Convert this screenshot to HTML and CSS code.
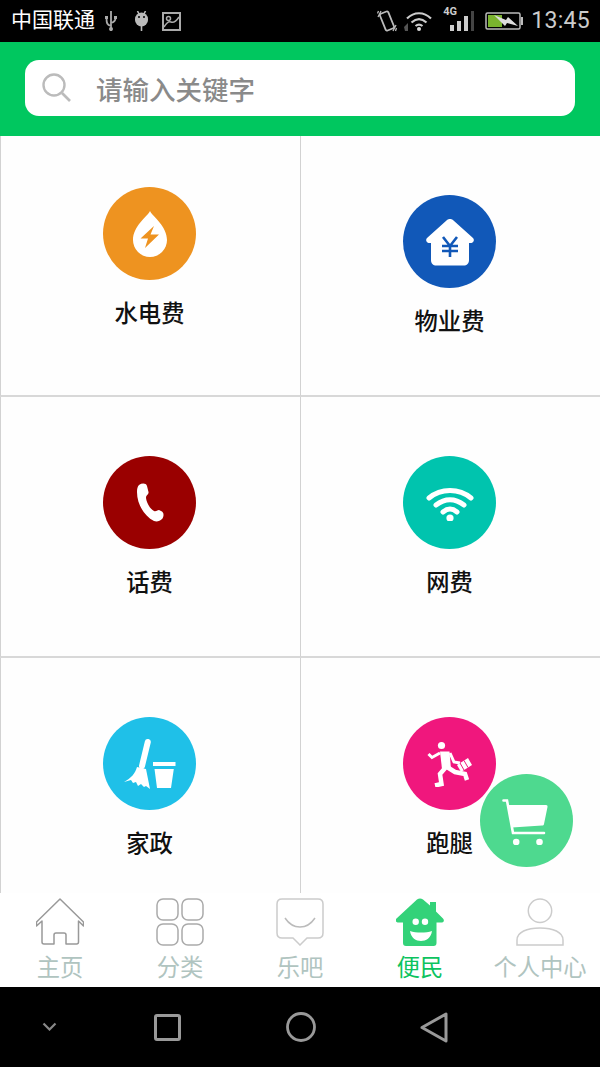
FILE: index.html
```html
<!DOCTYPE html>
<html lang="zh-CN">
<head>
  <meta charset="UTF-8">
  <link rel="stylesheet" href="styles.css">
</head>
<body>
  <div id="status-bar">
    <span class="carrier">中国联通</span>
    <svg class="st-usb" width="12" height="20" viewBox="0 0 12 20"><path d="M6 0v20M6 15C2 14 1.500 12 1.500 7M6 12c4-1 4.500-3 4.500-5" fill="none" stroke="#aaa" stroke-width="1.800"/><circle cx="6" cy="18" r="2" fill="#aaa"/><rect x="0" y="5" width="3" height="3" fill="#aaa"/><rect x="9" y="5" width="3" height="3" fill="#aaa"/></svg>
    <svg class="st-droid" width="13" height="20" viewBox="0 0 13 20"><path d="M0 8a6.500 6.500 0 0 1 13 0v1a6.500 6.500 0 0 1-13 0z" fill="#bbb"/><path d="M6.500 14v6M2.500 0l1.500 3M10.500 0l-1.500 3" stroke="#bbb" stroke-width="1.600"/><circle cx="4" cy="6" r="1" fill="#000"/><circle cx="9" cy="6" r="1" fill="#000"/></svg>
    <svg class="st-image" width="19" height="19" viewBox="0 0 19 19"><rect x="1" y="1" width="17" height="17" fill="none" stroke="#aaa" stroke-width="2"/><circle cx="6.500" cy="6.500" r="2" fill="none" stroke="#aaa" stroke-width="1.500"/><path d="M2 15c3-5 5-6 7-5s4 1 8-5" fill="none" stroke="#aaa" stroke-width="1.500"/></svg>
    <div class="status-right">
      <svg class="st-vibrate" width="20" height="22" viewBox="0 0 20 22"><rect x="5.500" y="2" width="9" height="18" rx="1.500" transform="rotate(-22 10 11)" fill="none" stroke="#bbb" stroke-width="1.800"/><path d="M4 1 1 7M19 15l-3 6M1.500 1 .5 3.500M19.500 18l-1 3" stroke="#bbb" stroke-width="1.300" fill="none"/></svg>
      <svg class="st-wifi" width="30" height="20" viewBox="0 0 30 20"><path d="M3 7.500c7-7 17-7 24 0M7.500 11.500c5-4.500 10-4.500 15 0M11.500 15c2.500-2 4.500-2 7 0" fill="none" stroke="#ccc" stroke-width="2.200"/><circle cx="15" cy="18" r="2" fill="#ddd"/><path d="M0 16l4-4v8H1z" fill="#555"/></svg>
      <div class="st-signal">
        <span class="net">4G</span>
        <svg width="25" height="20" viewBox="0 0 25 20"><path d="M0 14h4v6H0zM7 10h4v10H7zM14 5h4v15h-4z" fill="#ccc"/><path d="M21 0h3v20h-3z" fill="#444"/></svg>
      </div>
      <svg class="st-battery" width="38" height="18" viewBox="0 0 38 18"><rect x="1" y="1" width="34" height="16" rx="1.500" fill="none" stroke="#bbb" stroke-width="1.500"/><rect x="3" y="3" width="14" height="12" fill="#7ab32e"/><rect x="36" y="5" width="2" height="8" fill="#bbb"/><path d="M9 3l12 5 2-3 10 9-11-3-2 3z" fill="#ddd"/></svg>
      <span class="clock">13:45</span>
    </div>
  </div>

  <div id="search-wrap">
    <div class="search-box">
      <svg width="30" height="30" viewBox="0 0 30 30"><circle cx="13" cy="12" r="10.500" fill="none" stroke="#bbb" stroke-width="2.400"/><path d="M21 20l8 8" stroke="#bbb" stroke-width="2.600"/></svg>
      <span class="placeholder">请输入关键字</span>
    </div>
  </div>

  <div id="services">
    <div class="cell cell-tight">
      <div class="circle orange">
        <svg width="40" height="48" viewBox="0 0 40 48"><path d="M20 1C17 7 3 16 3 30a17 17 0 0 0 34 0C37 16 23 7 20 1z" fill="#fff"/><path d="M24 16L10.500 28.500h7.500L15 38l14-13.500h-8.500z" fill="#ee9320"/></svg>
      </div>
      <span class="label">水电费</span>
    </div>
    <div class="cell">
      <div class="circle blue">
        <svg width="50" height="50" viewBox="0 0 50 50"><path d="M25 2c1.500 0 2.500.5 3.500 1.500L48 21c1.500 1.500 1 4-1.500 5H44v17c0 3.500-2 5.500-5.500 5.500h-27C8 48.500 6 46.500 6 43V26H3.500C1 25 .5 22.500 2 21L21.500 3.500C22.500 2.500 23.500 2 25 2z" fill="#fff"/><path d="M18 20l7 9 7-9M17 29h16M17 34h16M25 29v11" fill="none" stroke="#1158b8" stroke-width="2.600"/></svg>
      </div>
      <span class="label">物业费</span>
    </div>
    <div class="cell">
      <div class="circle red">
        <svg width="30" height="42" viewBox="0 0 30 42"><path d="M4 3C7 1 11 1 12 4l1.500 6c.5 2-2 3-2.500 5 0 5 4 12 8 14 2 1 3-1 5-1l3 1.500c2 1.500 2 5 0 7.500-2 2-5 3-8 2C9 34 2 22 2 10c0-3 .5-5.500 2-7z" fill="#fff"/></svg>
      </div>
      <span class="label">话费</span>
    </div>
    <div class="cell">
      <div class="circle teal">
        <svg width="48" height="36" viewBox="0 -1 48 36"><path d="M3 12c12-10 30-10 42 0M10 19c9-7 19-7 28 0M17 26c5-4 9-4 14 0" fill="none" stroke="#fff" stroke-width="5" stroke-linecap="round"/><circle cx="24" cy="32" r="3.600" fill="#fff"/></svg>
      </div>
      <span class="label">网费</span>
    </div>
    <div class="cell">
      <div class="circle sky">
        <svg width="52" height="52" viewBox="0 0 52 52"><path d="M23.800 4L18 28" stroke="#fff" stroke-width="6" stroke-linecap="round"/><path d="M13 29l9 2 4 20-4-3-2 1-3-3-3 2-2-4-3 1-2-3-7 2c7-4 11-8 13-15z" fill="#fff"/><path d="M29 24h22.500v4H29zM30.500 31h19.300L47 50H33z" fill="#fff"/></svg>
      </div>
      <span class="label">家政</span>
    </div>
    <div class="cell">
      <div class="circle pink">
        <svg width="46" height="46" viewBox="0 0 46 46"><circle cx="14.500" cy="4.500" r="3.600" fill="#fff"/><path d="M1.500 13L5 16.500 13 12M23 12l4 9 6 1" fill="none" stroke="#fff" stroke-width="3"/><path d="M13 10.500h9.500L24 28h-9z" fill="#fff"/><path d="M19 26l-6 7 1.500 10L8 44.500M20 26l8 5 10 2 2 6" fill="none" stroke="#fff" stroke-width="4.500"/><path d="M30 24l11-7 4 7-11 7z" fill="#fff"/><path d="M33 22l4 7M37 19.500l4 7" stroke="#f0177d" stroke-width="1"/></svg>
      </div>
      <span class="label">跑腿</span>
    </div>
  </div>

  <div class="cart-fab">
    <svg width="50" height="48" viewBox="0 0 50 48"><path d="M1.500 3.500H5l6 32.500h31" fill="none" stroke="#fff" stroke-width="2.600" stroke-linecap="round"/><path d="M6 8h38c1.200 0 1.700.8 1.500 2l-3.500 17c-.2 1-.8 1.500-2 1.500L10 30.500z" fill="#fff"/><circle cx="14.200" cy="45" r="3.300" fill="#fff"/><circle cx="37.500" cy="45" r="3.300" fill="#fff"/></svg>
  </div>

  <div id="tab-bar">
    <div class="tab">
      <svg width="48" height="48" viewBox="0 0 48 48"><path d="M24 1L47.500 24v4l-5-5v21c0 1-1 2-2 2H30V37c0-1-1-2-2-2h-8c-1 0-2 1-2 2v9H8c-1 0-2-1-2-2V23l-5.500 5v-4z" fill="none" stroke="#999" stroke-width="1.500" stroke-linejoin="round"/></svg>
      <span class="tab-text">主页</span>
    </div>
    <div class="tab">
      <svg width="48" height="48" viewBox="0 0 48 48"><g fill="none" stroke="#aaa" stroke-width="1.500"><rect x="1" y="1" width="21" height="21" rx="6"/><rect x="26" y="1" width="21" height="21" rx="6"/><rect x="1" y="26" width="21" height="21" rx="6"/><rect x="26" y="26" width="21" height="21" rx="6"/></g></svg>
      <span class="tab-text">分类</span>
    </div>
    <div class="tab">
      <svg width="48" height="48" viewBox="0 0 48 48"><path d="M6 1h36c3 0 5 2 5 5v29c0 3-2 5-5 5H31l-7 7-7-7H6c-3 0-5-2-5-5V6c0-3 2-5 5-5z" fill="none" stroke="#ccc" stroke-width="1.500"/><path d="M9 20c8 12 22 12 30 0" fill="none" stroke="#bbb" stroke-width="1.500"/></svg>
      <span class="tab-text">乐吧</span>
    </div>
    <div class="tab active">
      <svg width="48" height="48" viewBox="0 0 48 48"><path d="M21 1.500c2-1.500 4-1.500 6 0l7 6V4h6v9.500l7 7c1.500 1.500 1 3.500-1 4h-5.500V45c0 2-1 3-3 3H10c-2 0-3-1-3-3V24.500H1.500c-2-.5-2.500-2.500-1-4z" fill="#33d279"/><circle cx="19.700" cy="23.700" r="3.200" fill="#fff"/><circle cx="29" cy="23.700" r="3.200" fill="#fff"/><path d="M14 33c6 2 16 2 22 0-1 7-6 10-11 10s-10-3-11-10z" fill="#fff"/></svg>
      <span class="tab-text">便民</span>
    </div>
    <div class="tab">
      <svg width="48" height="48" viewBox="0 0 48 48"><g fill="none" stroke="#ccc" stroke-width="1.500"><circle cx="24" cy="12.700" r="11.700"/><path d="M1 47v-5c0-8 10-12 23-12s23 4 23 12v5z"/></g></svg>
      <span class="tab-text">个人中心</span>
    </div>
  </div>

  <div id="nav-bar">
    <svg class="nav-chevron" width="15" height="9" viewBox="0 0 15 9"><path d="M1.500 1.500l6 6 6-6" fill="none" stroke="#888" stroke-width="2.200"/></svg>
    <svg class="nav-square" width="27" height="27" viewBox="0 0 27 27"><rect x="1.500" y="1.500" width="24" height="24" rx="1.500" fill="none" stroke="#999" stroke-width="3"/></svg>
    <svg class="nav-circle" width="30" height="30" viewBox="0 0 30 30"><circle cx="15" cy="15" r="13.500" fill="none" stroke="#999" stroke-width="2.800"/></svg>
    <svg class="nav-back" width="28" height="31" viewBox="0 0 28 31"><path d="M26 2v27L2 15.500z" fill="none" stroke="#999" stroke-width="3" stroke-linejoin="round"/></svg>
  </div>
</body>
</html>
```

FILE: styles.css
```css
html, body {
  width: 600px;
  height: 1067px;
  margin: 0;
  overflow: hidden;
  font-family: "Noto Sans CJK SC", "Noto Sans", sans-serif;
}

body {
  display: flex;
  flex-direction: column;
  position: relative;
  background: #fff;
}

svg {
  display: block;
  flex: none;
}

/* status bar */
#status-bar {
  height: 42px;
  flex: none;
  display: flex;
  align-items: center;
  background: #000;
  padding-left: 11px;
}

.carrier {
  flex: none;
  width: 85px;
  font-size: 21px;
  line-height: 36px;
  margin-bottom: 6px;
  white-space: nowrap;
  color: #fff;
}

.st-usb {
  margin-left: 9px;
}

.st-droid {
  margin-left: 18px;
}

.st-image {
  margin-left: 14px;
}

.status-right {
  display: flex;
  align-items: center;
  margin-left: auto;
  padding-right: 10px;
}

.st-wifi {
  margin-left: 7px;
}

.st-signal {
  position: relative;
  margin-left: 16px;
}

.net {
  position: absolute;
  left: -7px;
  top: -4px;
  font: bold 11px/10px "Roboto", sans-serif;
  color: #ccc;
}

.st-battery {
  margin-left: 10px;
}

.clock {
  margin-left: 8px;
  font: 23px/42px "Roboto", sans-serif;
  color: #ccc;
  letter-spacing: .3px;
}

/* search */
#search-wrap {
  height: 94px;
  flex: none;
  box-sizing: border-box;
  padding: 18px 25px 20px;
  background: #00c75f;
}

.search-box {
  height: 56px;
  display: flex;
  align-items: center;
  background: #fff;
  border-radius: 14px;
  padding-left: 16px;
}

.placeholder {
  margin-left: 25px;
  font-size: 26.500px;
  font-weight: 500;
  color: #8a8a8a;
}

/* service grid */
#services {
  flex: 1;
  min-height: 0;
  overflow: hidden;
  display: grid;
  grid-template-columns: 300px 300px;
  grid-auto-rows: 261px;
  background: #fefefe;
}

.cell {
  box-sizing: border-box;
  display: flex;
  flex-direction: column;
  align-items: center;
  padding: 59px 2px 0 0;
  border-left: 1px solid #d2d2d2;
  border-bottom: 2px solid #d8d8d8;
}

.cell-tight {
  padding-top: 51px;
}

.circle {
  width: 93px;
  height: 93px;
  border-radius: 50%;
  display: flex;
  align-items: center;
  justify-content: center;
}

.orange { background: #ee9320; }
.blue { background: #1158b8; }
.red { background: #9a0000; }
.teal { background: #00c4ae; }
.sky { background: #1fc0e8; }
.pink { background: #f0177d; }

.label {
  margin-top: 15px;
  font-size: 23.300px;
  line-height: 34px;
  font-weight: 500;
  color: #111;
}

.cart-fab {
  position: absolute;
  left: 480px;
  top: 774px;
  width: 93px;
  height: 93px;
  border-radius: 50%;
  background: #4ed98f;
  display: flex;
  align-items: center;
  justify-content: center;
}

/* bottom tabs */
#tab-bar {
  height: 94px;
  flex: none;
  display: grid;
  grid-template-columns: repeat(5, 120px);
  background: #fff;
}

.tab {
  display: flex;
  flex-direction: column;
  align-items: center;
  padding-top: 5px;
}

.tab-text {
  font-size: 23.300px;
  line-height: 34px;
  margin-top: 3px;
  color: #b0c4c0;
}

.tab.active .tab-text {
  color: #0dc35f;
}

/* android nav */
#nav-bar {
  height: 80px;
  flex: none;
  display: flex;
  align-items: center;
  background: #000;
}

.nav-chevron {
  margin-left: 42px;
  margin-top: -1px;
}

.nav-square {
  margin-left: 97px;
}

.nav-circle {
  margin-left: 105px;
}

.nav-back {
  margin-left: 104px;
}
```
